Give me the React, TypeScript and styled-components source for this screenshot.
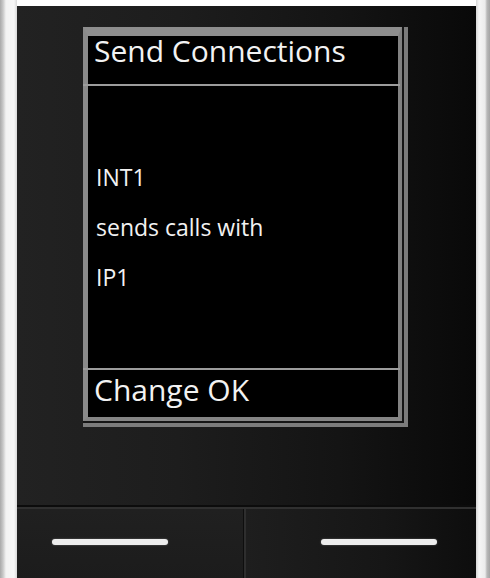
import React from 'react';
import styled, { createGlobalStyle } from 'styled-components';

const GlobalStyle = createGlobalStyle`
  html, body {
    margin: 0;
    padding: 0;
    background: #ffffff;
  }
  body {
    font-family: "Open Sans", "Noto Sans", "DejaVu Sans", sans-serif;
  }
`;

const Page = styled.div`
  display: flex;
  width: 490px;
  height: 578px;
  padding-top: 6px;
  box-sizing: border-box;
  background: #ffffff;
  overflow: hidden;
`;

const LeftEdge = styled.div`
  width: 17px;
  margin-top: -6px;
  background: linear-gradient(to right, #a9a9a9 0px, #c8c8c8 3px, #f3f3f3 6px, #f7f7f7 14px, #d9d9d9 17px);
`;

const RightEdge = styled.div`
  width: 14px;
  margin-top: -6px;
  background: linear-gradient(
    to right,
    #d6d6d6 0px,
    #f6f6f6 3px,
    #ececec 9px,
    #b9b9b9 11px,
    #a4a4a4 14px
  );
`;

const Phone = styled.div`
  flex: 1;
  display: flex;
  flex-direction: column;
  background: linear-gradient(to right, #222222 0%, #1d1d1d 35%, #141414 70%, #090909 100%);
`;

const ScreenArea = styled.div`
  height: 499px;
  padding: 21px 0 0 66px;
  box-sizing: border-box;
`;

const Bezel = styled.div`
  width: 325px;
  height: 400px;
  box-sizing: border-box;
  padding: 0 2px 2px 0;
  border-right: 4px solid #7c7c7c;
  border-bottom: 4px solid #7c7c7c;
  background: #161616;
`;

const Frame = styled.div`
  height: 100%;
  box-sizing: border-box;
  border-style: solid;
  border-color: #8e8e8e #828282 #858585 #8a8a8a;
  border-width: 9px 4px 4px 5px;
  background: #000000;
  display: flex;
  flex-direction: column;
  color: #f2f2f2;
`;

const TitleBar = styled.div`
  height: 48px;
  padding-left: 6px;
  font-size: 30px;
  line-height: 30px;
`;

const Rule = styled.div`
  height: 2px;
  margin: 0 -2px 0 -5px;
  background: #9c9c9c;
`;

const Body = styled.div`
  flex: 1;
  padding: 66px 0 0 8px;
  font-size: 23px;
  line-height: 50px;
`;

const Line = styled.div`
  white-space: nowrap;
`;

const Footer = styled.div`
  height: 47px;
  padding: 5px 0 0 6px;
  box-sizing: border-box;
  font-size: 30px;
  line-height: 30px;
`;

const KeyDivider = styled.div`
  height: 4px;
  border-top: 2px solid #0c0c0c;
  border-bottom: 2px solid #303030;
  box-sizing: border-box;
`;

const KeyRow = styled.div`
  flex: 1;
  display: flex;
`;

const SoftKey = styled.div<{ $side: 'left' | 'right' }>`
  flex: 1;
  display: flex;
  align-items: flex-start;
  justify-content: ${(p) => (p.$side === 'left' ? 'flex-start' : 'flex-end')};
  padding: 30px ${(p) => (p.$side === 'left' ? '0 0 35px' : '39px 0 0')};
  background: ${(p) =>
    p.$side === 'left'
      ? 'linear-gradient(to bottom, #202020, #1c1c1c)'
      : 'linear-gradient(to right, #1e1e1e, #161616 60%, #0d0d0d)'};
  ${(p) => (p.$side === 'left' ? 'border-right: 1px solid #0e0e0e;' : 'border-left: 2px solid #2e2e2e;')}
`;

const KeyBar = styled.div`
  width: 116px;
  height: 6px;
  border-radius: 3px;
  background: #ededed;
  box-shadow: 0 0 2px rgba(255, 255, 255, 0.35);
`;

export default function App() {
  return (
    <>
      <GlobalStyle />
      <Page>
        <LeftEdge />
        <Phone>
          <ScreenArea>
            <Bezel>
              <Frame>
                <TitleBar>Send Connections</TitleBar>
                <Rule />
                <Body>
                  <Line>INT1</Line>
                  <Line>sends calls with</Line>
                  <Line>IP1</Line>
                </Body>
                <Rule />
                <Footer>Change OK</Footer>
              </Frame>
            </Bezel>
          </ScreenArea>
          <KeyDivider />
          <KeyRow>
            <SoftKey $side="left">
              <KeyBar />
            </SoftKey>
            <SoftKey $side="right">
              <KeyBar />
            </SoftKey>
          </KeyRow>
        </Phone>
        <RightEdge />
      </Page>
    </>
  );
}
